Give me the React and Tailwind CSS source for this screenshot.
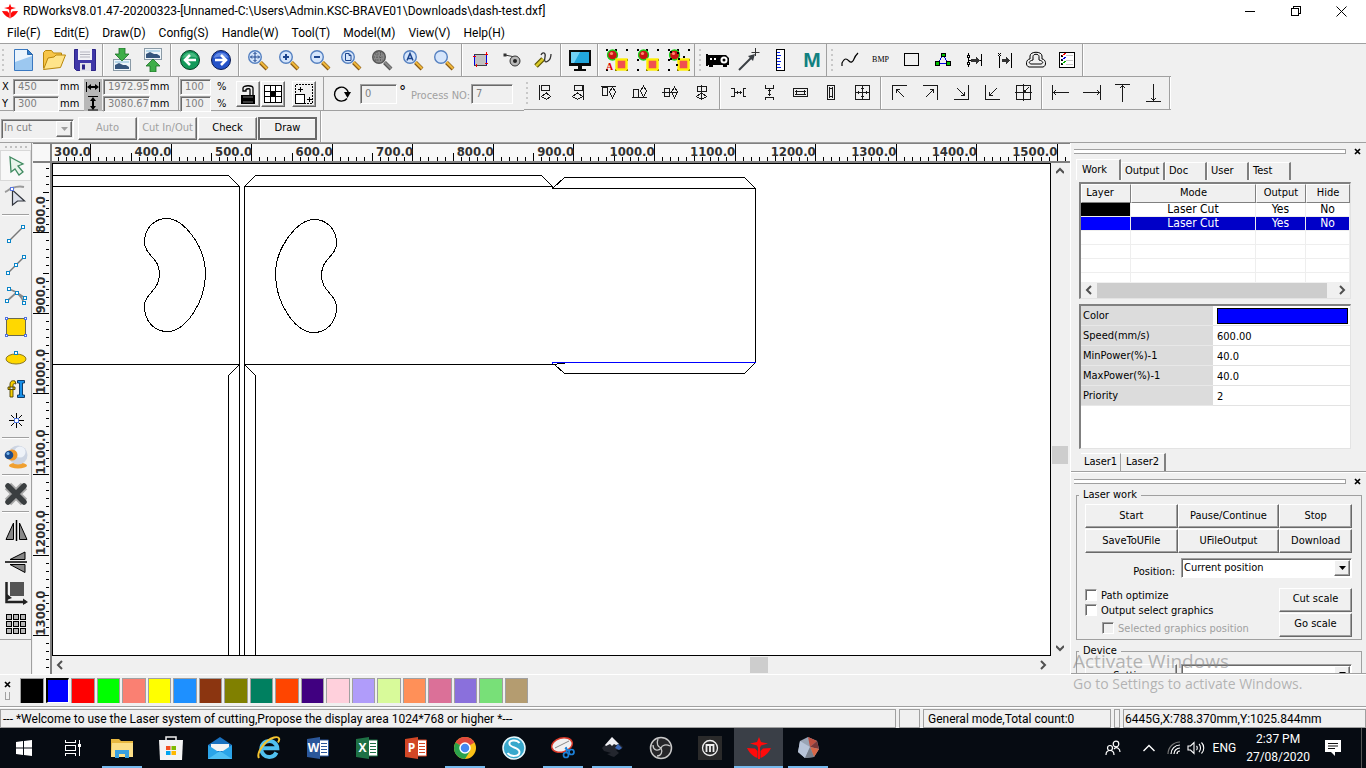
import React from "react";

const raised =
  "border border-t-white border-l-white border-r-[#696969] border-b-[#696969] shadow-[inset_-1px_-1px_#a0a0a0]";
const sunken =
  "border border-t-[#a0a0a0] border-l-[#a0a0a0] border-r-white border-b-white shadow-[inset_1px_1px_#696969]";

function Svg({ w = 24, h = 24, crisp, children }) {
  return (
    <svg
      width={w}
      height={h}
      viewBox={`0 0 ${w} ${h}`}
      fill="none"
      shapeRendering={crisp ? "crispEdges" : "auto"}
      className="block shrink-0"
      aria-hidden="true"
    >
      {children}
    </svg>
  );
}

function Tool({ label, children }) {
  return (
    <button type="button" aria-label={label} className="flex h-full w-[31px] shrink-0 items-center justify-center">
      {children}
    </button>
  );
}

function Sep() {
  return (
    <div className="flex w-1.5 shrink-0 justify-center self-stretch">
      <div className="w-0.5 border-l border-r border-l-[#a0a0a0] border-r-white" />
    </div>
  );
}

function Grip({ edge }) {
  return (
    <div className={`flex shrink-0 items-center gap-[3px] self-stretch ${edge ? "w-2 border-l border-[#a0a0a0] pl-1" : "w-[7px] pl-0.5"}`}>
      <div className="h-[22px] w-0.5 bg-[repeating-linear-gradient(to_bottom,#c8c8c8_0_2px,transparent_2px_5px)]" />
    </div>
  );
}

/* ---------- main toolbar icons ---------- */

function Magnifier({ gray, children }) {
  return (
    <Svg w={22} h={22}>
      <path d="M13.5 13.5L20 20" stroke={gray ? "#555" : "#8a5a14"} strokeWidth="4" />
      <path d="M13.5 13L20 19.5" stroke={gray ? "#888" : "#f0b83c"} strokeWidth="2.2" />
      <circle cx="8" cy="8" r="6.3" fill={gray ? "#8a8a8a" : "#d5e5fb"} stroke={gray ? "#555" : "#5580c0"} strokeWidth="1.4" />
      {children}
    </Svg>
  );
}

function Picture({ y }) {
  return (
    <g>
      <rect x="3.5" y={y + 0.5} width="17" height="11" fill="#eef5fa" stroke="#8a9aa6" />
      <path d={`M5 ${y + 10}V${y + 6}l4-2 4 2 3 0 3 2v2z`} fill="#35557d" />
      <path d={`M5 ${y + 2}h14v2H5z`} fill="#b8d8ea" />
    </g>
  );
}

function Ball({ variant }) {
  return (
    <Svg w={24} h={24}>
      <g fill="#000">
        {[0, 9, 20].map((x) => (
          <React.Fragment key={x}>
            <rect x={x + 1} y="1" width="2" height="2" />
            <rect x={x + 1} y="21" width="2" height="2" />
          </React.Fragment>
        ))}
        <rect x="21" y="11" width="2" height="2" />
        {variant !== "a" && <rect x="1" y="11" width="2" height="2" />}
      </g>
      <circle cx="7.5" cy="7" r="5" fill="#c81414" stroke="#18d018" strokeWidth="1.3" />
      <circle cx="6.5" cy="5.5" r="1.6" fill="#ff8a70" />
      <rect x="11.5" y="11.5" width="10" height="10" fill="#f05050" stroke="#ffee00" strokeWidth="2.4" />
      {variant === "a" && (
        <text x="1" y="22" fontSize="10" fontFamily="Liberation Serif, serif" fontWeight="700" fill="#e00000">
          A
        </text>
      )}
      {variant === "c" && (
        <g fill="#000">
          <rect x="3" y="3" width="2" height="2" />
          <rect x="10" y="4" width="2" height="2" />
          <rect x="3" y="10" width="2" height="2" />
          <rect x="11" y="10" width="2" height="2" />
          <rect x="16" y="8" width="2" height="2" />
          <rect x="9" y="16" width="2" height="2" />
        </g>
      )}
    </Svg>
  );
}

function MainToolbar() {
  return (
    <div className="flex h-8 items-stretch">
      <Grip />
      <Tool label="New">
        <Svg>
          <path d="M3.5 1.5h13l5 5v16h-18z" fill="#eaf4fd" stroke="#3a78c0" />
          <path d="M4 14l17-6v14H4z" fill="#9cc8f0" />
          <path d="M16.5 1.5v5h5z" fill="#2f7fd0" stroke="#2a66a8" />
        </Svg>
      </Tool>
      <Tool label="Open">
        <Svg>
          <path d="M1.5 20V4.5l2-2h6l2 2.5h8v4" fill="#f7c548" stroke="#b8860b" />
          <path d="M1.5 21.5L6 10l6-1 2-2h9.5l-5 12.5z" fill="#ffe48a" stroke="#b8860b" />
        </Svg>
      </Tool>
      <Tool label="Save">
        <Svg>
          <path d="M1.5 1.5h21v21h-19l-2-2z" fill="#4038a8" stroke="#2c2488" />
          <path d="M5 1h14v11H5z" fill="#f2f2f6" />
          <path d="M7 4h10M7 6.5h10M7 9h10" stroke="#b4b4be" />
          <path d="M7 15h11v8H7z" fill="#e4e4ea" />
          <path d="M9 16.5h3v5H9z" fill="#2c2488" />
        </Svg>
      </Tool>
      <Sep />
      <Tool label="Import">
        <Svg>
          <Picture y={11} />
          <path d="M9 0h6v6h4l-7 7-7-7h4z" fill="#3fae49" stroke="#1d6e26" strokeWidth=".8" />
        </Svg>
      </Tool>
      <Tool label="Export">
        <Svg>
          <Picture y={0} />
          <path d="M9 24h6v-6h4l-7-7-7 7h4z" fill="#3fae49" stroke="#1d6e26" strokeWidth=".8" />
        </Svg>
      </Tool>
      <Sep />
      <Tool label="Undo">
        <Svg w={22} h={22}>
          <circle cx="11" cy="11" r="9.5" fill="#14995a" stroke="#063c24" />
          <path d="M3.5 9a8 8 0 0 1 15 0c-5-2-10-2-15 0z" fill="#5cc890" opacity=".7" />
          <path d="M17 11H6.5M11 6l-5 5 5 5" stroke="#fff" strokeWidth="2.6" />
        </Svg>
      </Tool>
      <Tool label="Redo">
        <Svg w={22} h={22}>
          <circle cx="11" cy="11" r="9.5" fill="#2452c8" stroke="#0a1a50" />
          <path d="M3.5 9a8 8 0 0 1 15 0c-5-2-10-2-15 0z" fill="#7ca0f0" opacity=".7" />
          <path d="M5 11h10.5M11 6l5 5-5 5" stroke="#fff" strokeWidth="2.6" />
        </Svg>
      </Tool>
      <Sep />
      <Tool label="Pan">
        <Magnifier>
          <path d="M8 3.5v9M3.5 8h9M6.5 5L8 3.5 9.5 5M6.5 11L8 12.5 9.5 11M5 6.5L3.5 8 5 9.5M11 6.5L12.5 8 11 9.5" stroke="#1c458e" />
        </Magnifier>
      </Tool>
      <Tool label="Zoom in">
        <Magnifier>
          <path d="M8 5v6M5 8h6" stroke="#1c458e" strokeWidth="2" />
        </Magnifier>
      </Tool>
      <Tool label="Zoom out">
        <Magnifier>
          <path d="M5 8h6" stroke="#1c458e" strokeWidth="2" />
        </Magnifier>
      </Tool>
      <Tool label="Zoom to page">
        <Magnifier>
          <path d="M5.5 4.5h3.5l2 2v5H5.5zM9 4.5v2h2" stroke="#1c458e" />
        </Magnifier>
      </Tool>
      <Tool label="Zoom to data">
        <Magnifier gray>
          <path d="M4 5h8M3 8h10M4 11h8M6 3v10M9.5 3v10" stroke="#555" strokeDasharray="1 1.5" />
        </Magnifier>
      </Tool>
      <Tool label="Zoom to selection">
        <Magnifier>
          <path d="M5 11.5L8 4.5l3 7M6 9.5h4" stroke="#1c458e" strokeWidth="1.5" />
        </Magnifier>
      </Tool>
      <Tool label="Zoom window">
        <Magnifier />
      </Tool>
      <Sep />
      <Tool label="Show path">
        <Svg w={18} h={18} crisp>
          <rect x="2" y="3" width="13" height="11" fill="#c0c0c0" />
          <path d="M2.5 3v12M14.5 2v12" stroke="#0000e0" />
          <path d="M2 3.5h13M2 14.5h13" stroke="#404040" />
          <path d="M1 5.5h3M13 3.5h3M13 12.5h3M4.5 13v3M14.5 1v3" stroke="#f00000" />
        </Svg>
      </Tool>
      <Tool label="Track">
        <Svg w={18} h={18}>
          <path d="M2 4l10 2" stroke="#333" />
          <rect x=".5" y="2.5" width="3" height="3" fill="#333" />
          <circle cx="12" cy="10" r="5" fill="#b8b8b8" stroke="#333" />
          <circle cx="12" cy="10" r="2" fill="#222" />
        </Svg>
      </Tool>
      <Tool label="Cut settings">
        <Svg w={20} h={18}>
          <path d="M3 15l7-7" stroke="#5c5400" strokeWidth="5" />
          <path d="M3 15l7-7" stroke="#d8c828" strokeWidth="2.5" />
          <path d="M8 4c2-4 5-2 4 2s0 6 3 4 3-4 3-7" stroke="#333" strokeWidth="1.3" />
        </Svg>
      </Tool>
      <Sep />
      <Tool label="Preview">
        <Svg>
          <path d="M1 2h22v16H1z" fill="#0a0a0a" />
          <path d="M3 4h18v11H3z" fill="#22a6dc" />
          <path d="M3 4h9l-6 11H3z" fill="#70d0f4" />
          <path d="M10 18h4v3h4v2H6v-2h4z" fill="#0a0a0a" />
        </Svg>
      </Tool>
      <Sep />
      <Tool label="Select by layer"><Ball variant="a" /></Tool>
      <Tool label="Select by color"><Ball variant="b" /></Tool>
      <Tool label="Select by shape"><Ball variant="c" /></Tool>
      <Grip edge />
      <Tool label="Laser position">
        <Svg>
          <path d="M0 6h2v1h18l3 3v7H2v1H0z" fill="#000" />
          <path d="M3 17h4v2H3zM17 17h4v2h-4z" fill="#000" />
          <circle cx="18" cy="12" r="3.5" fill="#fff" />
          <circle cx="18" cy="12" r="1.5" fill="#000" />
          <path d="M4 10h2v2H4zM8 10h2v2H8z" fill="#fff" />
        </Svg>
      </Tool>
      <Tool label="Magic wand">
        <Svg>
          <path d="M2 22L15 9" stroke="#3a3f44" strokeWidth="2" />
          <path d="M11 8l7-2-2 7z" fill="#3a3f44" />
          <path d="M18.5 0v8M14.5 4.5h8" stroke="#333" />
        </Svg>
      </Tool>
      <Tool label="Ruler">
        <Svg w={24} h={24} crisp>
          <rect x="8.5" y="1.5" width="8" height="21" fill="#fff" stroke="#000" />
          <path d="M9 4.5h3M9 7.5h4M9 10.5h3M9 13.5h4M9 16.5h3M9 19.5h4" stroke="#0020f0" />
        </Svg>
      </Tool>
      <Tool label="Material library">
        <span className="pl-[3px] font-['Liberation_Sans',sans-serif] text-[21px] font-bold leading-6 text-[#128080]">M</span>
      </Tool>
      <Grip edge />
      <Tool label="Smooth curve">
        <Svg w={18} h={16}>
          <path d="M1 14v-3c3-6 5-4 7-2s4 1 5-2 2-4 4-6" stroke="#000" strokeWidth="1.2" />
        </Svg>
      </Tool>
      <Tool label="Bitmap">
        <span className="font-['Liberation_Serif',serif] text-[8px] leading-3">BMP</span>
      </Tool>
      <Tool label="Rectangle">
        <Svg w={16} h={16} crisp>
          <rect x=".5" y="1.5" width="14" height="12" stroke="#000" />
        </Svg>
      </Tool>
      <Tool label="Edit nodes">
        <Svg w={16} h={16} crisp>
          <path d="M8 3L3 11h10z" stroke="#0000e0" />
          <path d="M6.5 1.5h4v3h-4zM.5 9.5h4v4h-4zM11.5 9.5h4v4h-4z" fill="#00c000" stroke="#000" />
        </Svg>
      </Tool>
      <Tool label="Offset">
        <Svg w={16} h={16} crisp>
          <path d="M2.5 1v14M15.5 2v12M3 8.5h3M11 8.5h4" stroke="#000" />
          <path d="M1.5 3.5h2v2h-2zM1.5 10.5h2v2h-2z" fill="#fff" stroke="#000" />
          <path d="M5 7h5V5l4 3.5-4 3.5v-2H5z" fill="#333" />
        </Svg>
      </Tool>
      <Tool label="Align nodes">
        <Svg w={16} h={16} crisp>
          <path d="M2.5 4v12M14.5 1v15" stroke="#000" />
          <path d="M1 1l3 3M4 1L1 4" stroke="#000" />
          <path d="M5 7h4V5l4 3.5-4 3.5v-2H5z" fill="#333" />
        </Svg>
      </Tool>
      <Tool label="Outline">
        <Svg w={22} h={18}>
          <path d="M5 5c0-5 12-5 12 0v3c4 0 5 7 1 8H4c-4-1-3-8 1-8z" stroke="#000" />
          <path d="M8 5.5c0-3 6-3 6 0V9c4 1 5 3 2 4H6c-3-1-2-3 2-4z" stroke="#000" />
        </Svg>
      </Tool>
      <Tool label="Check list">
        <Svg w={18} h={18} crisp>
          <rect x="1.5" y="1.5" width="15" height="15" fill="#fff" stroke="#000" />
          <path d="M8 4.5h7M8 9h7M8 13.5h7" stroke="#c8c8c8" />
          <path d="M3 4h2v2H3zM3 8h2v2H3zM3 12h2v2H3z" fill="#000" />
          <path d="M4 5l4-3" stroke="#f00000" />
          <path d="M4 9l4-3" stroke="#0000e0" />
          <path d="M4 13l4-3" stroke="#00b000" />
        </Svg>
      </Tool>
      <div className="w-0.5 border-l border-r border-l-[#a0a0a0] border-r-white" />
    </div>
  );
}

/* ---------- position and alignment bar ---------- */

function Field({ label, value, className = "" }) {
  return (
    <input
      aria-label={label}
      defaultValue={value}
      disabled
      className={`${sunken} bg-[#f0f0f0] pl-1 text-[11px] text-[#808080] outline-none ${className}`}
    />
  );
}

const alignIcons = [
  [
    ["Align left", "M1.5 1v15M3 1.5h8v5H3zM8.5 9l-5 3.5 5 3 4-3z"],
    ["Align right", "M14.5 1v15M5 1.5h8v5H5zM8.5 9l-5 3.5 5 3 5-3z"],
    ["Align top", "M1 2.5h15M2.5 3v8h5V3zM12.5 3l-3 5 3 6 3-6z"],
    ["Align bottom", "M1 13.5h15M2.5 5v8h5V5zM12.5 2l-3 5 3 6 3-6z"],
    ["Align middle", "M0 8.5h16M2.5 4v8h5V4zM12.5 3l-3 5 3 6 3-6z"],
    ["Align center", "M8.5 1v15M4 2.5h9v5H4zM8.5 9l-5 3.5 5 3 5-3z"],
  ],
  [
    ["Equal horizontal", "M1 4.5h3v8H1M16 4.5h-3v8h3M5 8.5h7M7 7v3M10 7v3"],
    ["Equal vertical", "M4.5 1v3h8V1M4.5 16v-3h8v3M8.5 5v7M7 6.5h3M7 10.5h3"],
    ["Same width", "M1.5 4.5h14v8h-14zM3 7.5h11M3 10.5h11M4.5 6v5M12.5 6v5"],
    ["Same height", "M4.5 1.5h7v14h-7zM6.5 3v11M9.5 3v11M6 4.5h4M6 12.5h4"],
    ["Same size", "M1.5 1.5h14v14h-14zM8.5 2v13M2 8.5h13M4.5 7v3M12.5 7v3M7 4.5h3M7 12.5h3"],
  ],
  [
    ["To top left", "M1.5 16V1.5H16M5 5l8 8M5 5.5h4M5.5 5v4"],
    ["To top right", "M1 1.5h14.5V16M12 5l-8 8M12 5.5H8M11.5 5v4"],
    ["To bottom right", "M15.5 1v14.5H1M12 12L4 4M12 11.5H8M11.5 12V8"],
    ["To bottom left", "M1.5 1v14.5H16M5 12l8-8M5 11.5h4M5.5 12V8"],
    ["To center", "M1.5 1.5h14v14h-14zM8.5 0v17M0 8.5h17M8 9l6-6M8 7.5h3M9.5 9V6"],
  ],
  [
    ["To left edge", "M.5 1v15M1 8.5h16M4 6L2 8.5 4 11"],
    ["To right edge", "M17.5 1v15M0 8.5h17M14 6l2 2.5-2 2.5"],
    ["To top edge", "M1 .5h15M8.5 1v17M6 4l2.5-2L11 4"],
    ["To bottom edge", "M1 17.5h15M8.5 0v17M6 14l2.5 2 2.5-2"],
  ],
];

function PositionBar() {
  return (
    <div className="flex items-start">
      <div className="flex h-[35px] w-[524px] shrink-0 items-stretch border-y border-t-[#a0a0a0] border-b-[#a0a0a0] text-[11px]">
        <div className="flex w-[178px] items-center pl-0.5 pt-[3px]">
          <div className="grid grid-cols-[11px_46px_25px] items-center gap-y-px leading-4">
            <label>X</label>
            <Field label="X" value="450" className="h-4 w-[46px]" />
            <span className="pl-px">mm</span>
            <label>Y</label>
            <Field label="Y" value="300" className="h-4 w-[46px]" />
            <span className="pl-px">mm</span>
          </div>
          <div className="flex flex-col bg-[#b8b8b8]">
            <Svg w={18} h={16}>
              <path d="M2.5 3v10M15.5 3v10" stroke="#000" />
              <path d="M3 8l4-3v2h4V5l4 3-4 3V9H7v2z" fill="#000" />
            </Svg>
            <Svg w={18} h={16}>
              <path d="M4 1.5h10M4 15h10" stroke="#000" />
              <path d="M9 2L6 6h2v5H6l3 4 3-4h-2V6h2z" fill="#000" />
            </Svg>
          </div>
          <div className="grid grid-cols-[47px_25px] items-center gap-y-px pl-px leading-4">
            <Field label="Width" value="1972.95" className="h-4 w-[47px]" />
            <span>mm</span>
            <Field label="Height" value="3080.67" className="h-4 w-[47px]" />
            <span>mm</span>
          </div>
        </div>
        <div className="flex w-[146px] items-center gap-[3px] border-x border-x-[#a0a0a0] pl-px">
          <div className="grid grid-cols-[31px_22px] items-center gap-y-px pt-[3px] leading-4">
            <Field label="Width percent" value="100" className="h-4 w-[31px]" />
            <span className="pl-1.5">%</span>
            <Field label="Height percent" value="100" className="h-4 w-[31px]" />
            <span className="pl-1.5">%</span>
          </div>
          <button type="button" aria-label="Lock ratio" className={`flex h-[26px] w-6 items-center justify-center ${raised}`}>
            <Svg w={18} h={20}>
              <path d="M4 4c0-3 10-3 10 0v7M4 4v3h3V5.5c1-1 4-1 4 0V11" stroke="#000" strokeWidth="1.3" />
              <path d="M2 11h14v9H2z" fill="#000" />
              <path d="M4 13h10M4 18h10" stroke="#aaa" strokeWidth=".7" />
            </Svg>
          </button>
          <button type="button" aria-label="Anchor" className={`-ml-0.5 flex h-[26px] w-6 items-center justify-center ${raised}`}>
            <Svg w={18} h={18} crisp>
              <rect x=".5" y=".5" width="17" height="17" fill="#fff" stroke="#000" />
              <path d="M1 6.5h16M1 11.5h16M6.5 1v16M11.5 1v16" stroke="#000" />
              <path d="M6 6h6v6H6z" fill="#000" />
            </Svg>
          </button>
          <button type="button" aria-label="Array copy" className={`ml-1 flex h-[26px] w-6 items-center justify-center ${raised}`}>
            <Svg w={22} h={22} crisp>
              <path d="M2.5 10V1.5h17v19H12" stroke="#000" strokeDasharray="2 1" />
              <rect x="2.5" y="11.5" width="9" height="9" fill="#fff" stroke="#000" />
              <path d="M7.5 4v5M5 6.5h5M16.5 14v5M14 16.5h5" stroke="#000" />
            </Svg>
          </button>
        </div>
        <div className="flex items-center">
          <div className="flex w-9 justify-center">
            <Svg w={20} h={20}>
              <path d="M15 14.5A7 7 0 1 1 16.5 10" stroke="#000" strokeWidth="1.4" />
              <path d="M12 8h7l-3.5 6z" fill="#000" />
            </Svg>
          </div>
          <Field label="Angle" value="0" className="h-5 w-[37px]" />
          <span className="w-3.5 self-start pl-0.5 text-[16px] leading-[30px]">°</span>
          <label className="mt-1.5 w-[60px] text-[#a0a0a0]">Process NO:</label>
          <Field label="Process number" value="7" className="h-5 w-[42px]" />
        </div>
      </div>
      <div className="flex h-[34px] items-stretch border-y border-[#a0a0a0]">
        <Grip />
        {alignIcons.map((group, i) => (
          <React.Fragment key={i}>
            {i > 0 && <Sep />}
            {group.map(([label, d]) => (
              <Tool key={label} label={label}>
                <Svg w={18} h={18} crisp>
                  <path d={d} stroke="#1a1a1a" />
                </Svg>
              </Tool>
            ))}
          </React.Fragment>
        ))}
        <div className="w-0.5 border-l border-r border-l-[#a0a0a0] border-r-white" />
      </div>
    </div>
  );
}

function CutBar() {
  const btn = "flex h-[23px] w-[59px] items-center justify-center";
  return (
    <div className="flex h-[31px] items-stretch">
      <div className="flex items-center gap-px pl-px pt-1">
        <div className="relative mr-[3px]">
          <select aria-label="Cut mode" disabled className={`block h-5 w-[73px] appearance-none bg-[#f0f0f0] px-0.5 text-[11px] text-[#808080] opacity-100 ${sunken}`}>
            <option>In cut</option>
          </select>
          <span className={`pointer-events-none absolute right-0.5 top-0.5 flex h-4 w-4 items-center justify-center bg-[#f0f0f0] ${raised}`}>
            <Svg w={7} h={4}><path d="M0 0h7L3.5 4z" fill="#a0a0a0" /></Svg>
          </span>
        </div>
        <button type="button" disabled className={`${btn} ${raised} text-[#a0a0a0]`}>Auto</button>
        <button type="button" disabled className={`${btn} ${raised} whitespace-nowrap text-[#a0a0a0]`}>Cut In/Out</button>
        <button type="button" className={`${btn} ${raised}`}>Check</button>
        <button type="button" className={`${btn} border-2 border-[#696969] shadow-[inset_1px_1px_#fff]`}>Draw</button>
      </div>
      <div className="ml-[3px] border-l border-r border-l-[#a0a0a0] border-r-white" />
    </div>
  );
}

/* ---------- left drawing tools ---------- */

function SideTool({ label, active, children }) {
  return (
    <button
      type="button"
      aria-label={label}
      className={`flex h-[31px] w-full shrink-0 items-center justify-center ${active ? "border border-[#d8d8d8] bg-[#f8f8f8]" : ""}`}
    >
      {children}
    </button>
  );
}

function SideSep() {
  return (
    <div className="flex h-1.5 shrink-0 items-center px-0.5">
      <div className="h-0.5 w-full border-t border-b border-t-[#a0a0a0] border-b-white" />
    </div>
  );
}

const node = (x, y) => <rect key={`${x}-${y}`} x={x - 1.5} y={y - 1.5} width="3" height="3" fill="#fff" stroke="#0a84c8" />;

function SideBar() {
  return (
    <nav aria-label="Drawing tools" className="flex w-8 shrink-0 flex-col border-r border-[#a0a0a0]">
      <div className="flex h-[7px] shrink-0 items-center justify-center">
        <div className="h-0.5 w-[22px] bg-[repeating-linear-gradient(to_right,#c0c0c0_0_2px,transparent_2px_5px)]" />
      </div>
      <SideTool label="Select" active>
        <Svg w={18} h={22}>
          <path d="M3 2l13 7-5 2 5 6-4 3-4-6-4 3z" fill="#e8f4ea" stroke="#3f8a60" strokeWidth="1.3" />
        </Svg>
      </SideTool>
      <SideTool label="Node edit">
        <Svg>
          <path d="M1 7c3-1 4-3 7-4s8-2 12-1" stroke="#999" strokeWidth="2" />
          <path d="M8.5 5v15l5-4h7z" fill="#dce0ec" stroke="#30343c" strokeWidth="1.2" />
          <rect x="6.5" y="2.5" width="3" height="3" fill="#fff" stroke="#5a78e0" />
        </Svg>
      </SideTool>
      <SideSep />
      <SideTool label="Line">
        <Svg w={20} h={20}><path d="M3 17L17 3" stroke="#777" strokeWidth="1.5" />{node(3, 17)}{node(17, 3)}</Svg>
      </SideTool>
      <SideTool label="Polyline">
        <Svg w={20} h={20}><path d="M2 18L18 2" stroke="#777" strokeWidth="1.5" />{node(2, 18)}{node(10, 10)}{node(18, 2)}</Svg>
      </SideTool>
      <SideTool label="Bezier">
        <Svg w={22} h={20}>
          <path d="M2 15L11 7M4 3l7 3 9 6M11 7c5 2 6 6 8 10" stroke="#888" strokeWidth="1.7" />
          {node(2, 15)}{node(4, 3)}{node(12, 7)}{node(20, 12)}{node(19, 17)}
        </Svg>
      </SideTool>
      <SideTool label="Rectangle">
        <Svg w={22} h={22}>
          <rect x="1.5" y="2.5" width="19" height="17" fill="#ffd800" stroke="#6a6a50" />
          {[[1.5, 2.5], [20.5, 2.5], [1.5, 19.5], [20.5, 19.5]].map(([x, y]) => (
            <rect key={`${x}${y}`} x={x - 1} y={y - 1} width="2" height="2" fill="#fff" stroke="#5070e0" />
          ))}
        </Svg>
      </SideTool>
      <SideTool label="Ellipse">
        <Svg w={22} h={14}>
          <ellipse cx="11" cy="8" rx="10" ry="5" fill="#ffd800" stroke="#8a7820" />
          {node(11, 2)}
        </Svg>
      </SideTool>
      <SideTool label="Text">
        <Svg w={20} h={22}>
          <path d="M9 3c-4-1-5 1-5 4v12h3V7c0-1 1-2 3-1zM2 9h7v2.5H2z" fill="#f8d000" stroke="#4a4000" strokeWidth=".9" />
          <path d="M11.5 2.5h7v2.5h-2v12h2v2.5h-7V17h2V5h-2z" fill="#1890e8" stroke="#123c68" />
        </Svg>
      </SideTool>
      <SideTool label="Point">
        <Svg w={16} h={16} crisp>
          <path d="M8.5 1v15M1 8.5h15M3 3l11 11M14 3L3 14" stroke="#000" />
          <rect x="6.5" y="6.5" width="4" height="4" fill="#fff" stroke="#5078e0" />
        </Svg>
      </SideTool>
      <SideSep />
      <SideTool label="Camera">
        <Svg>
          <ellipse cx="14" cy="20.5" rx="9" ry="3" fill="#f0a030" />
          <circle cx="14" cy="10" r="9.5" fill="#ccd4e2" />
          <circle cx="16" cy="7" r="5.5" fill="#eef2f8" />
          <circle cx="8" cy="10" r="5.5" fill="#f09828" />
          <circle cx="5" cy="10" r="4.3" fill="#1c4c8c" />
          <circle cx="4" cy="8.5" r="1.5" fill="#78b8f0" />
        </Svg>
      </SideTool>
      <SideSep />
      <SideTool label="Delete">
        <Svg>
          <path d="M4 4l16 16M20 4L4 20" stroke="#a8a8a8" strokeWidth="9" />
          <path d="M4 4l16 16M20 4L4 20" stroke="#3a3e40" strokeWidth="5.5" strokeLinecap="round" />
        </Svg>
      </SideTool>
      <SideSep />
      <SideTool label="Mirror horizontally">
        <Svg>
          <path d="M12.5 1v21" stroke="#000" strokeWidth="1.5" />
          <path d="M9.5 4v16.5H2zM15.5 4v16.5H23z" fill="#888" stroke="#000" />
        </Svg>
      </SideTool>
      <SideTool label="Mirror vertically">
        <Svg>
          <path d="M1 12h22" stroke="#000" strokeWidth="1.5" />
          <path d="M21 9.5H6L21 2zM21 14.5H6l15 8z" fill="#888" stroke="#000" />
        </Svg>
      </SideTool>
      <SideTool label="Dock">
        <Svg>
          <path d="M6 1h14v14H6z" fill="#555" />
          <path d="M2.5 1v20H22" stroke="#222" strokeWidth="2.5" />
          <path d="M19 17.5l5 3.5-5 3zM3 13l5 4-5 2z" fill="#222" />
        </Svg>
      </SideTool>
      <SideTool label="Array">
        <Svg w={22} h={22} crisp>
          {[1.5, 8.5, 15.5].flatMap((x) =>
            [1.5, 8.5, 15.5].map((y) => <rect key={`${x}-${y}`} x={x} y={y} width="5" height="5" fill="#b8b8b8" stroke="#000" />)
          )}
        </Svg>
      </SideTool>
      <div className="border-t border-[#a0a0a0]" />
    </nav>
  );
}

/* ---------- rulers and drawing area ---------- */

const ticks = (first, count) => Array.from({ length: count }, (_, i) => [Math.round(first + i * 8.053) + 0.5, i]);
const rulerText = "fill-[#333] text-[13px] font-bold";

function TopRuler() {
  return (
    <svg className="h-full w-full" aria-label="Horizontal ruler">
      {ticks(-2, 128).map(([x, i]) => {
        const k = (i + 5) % 10;
        return <path key={i} d={`M${x} ${k === 0 ? 0 : k === 5 ? 9 : 13}V17`} stroke="#000" shapeRendering="crispEdges" />;
      })}
      {Array.from({ length: 13 }, (_, i) => (
        <text key={i} x={39 + i * 80.53} y="12" textAnchor="end" className={rulerText}>
          {`${300 + i * 100}.0`}
        </text>
      ))}
    </svg>
  );
}

function SideRuler() {
  return (
    <svg className="h-full w-full" aria-label="Vertical ruler">
      {ticks(5, 64).map(([y, i]) => {
        const k = (i + 2) % 10;
        return <path key={i} d={`M${k === 0 ? 0 : k === 5 ? 10 : 13} ${y}H16`} stroke="#000" shapeRendering="crispEdges" />;
      })}
      {Array.from({ length: 6 }, (_, i) => (
        <text key={i} transform={`translate(12 ${70 + i * 80.53}) rotate(-90)`} className={rulerText}>
          {`${800 + i * 100}.0`}
        </text>
      ))}
    </svg>
  );
}

const BEAN =
  "M166.5 218.5C153 218.5 144.5 230 144.5 241.5C144.5 256 159.5 257 159.5 274C159.5 291 144.5 293 144.5 306.5C144.5 321 154 331.5 167.5 331.5C185 331.5 205.5 303 205.5 273C205.5 247 184 218.5 166.5 218.5Z";

function Drawing() {
  return (
    <svg className="h-full w-full" aria-label="Drawing" fill="none" stroke="#000" shapeRendering="crispEdges">
      <g transform="translate(-53 -164)">
        <path d="M50 175.5H228.5L239.5 186.5M50 186.5H239.5M244.5 186.5L255.5 175.5H541.5L553.5 187.5M244.5 186.5H552.5V188.5H755.5V362.5" />
        <path d="M553.5 187.5L564.5 177.5H744.5L755.5 188.5M239.5 186V900M244.5 186V900M50 364.5H239.5M244.5 364.5H557" />
        <path d="M239.5 364.5L228.5 375.5V900M244.5 364.5L255.5 375.5V900" />
        <path d="M554.5 364.5L564.5 373.5H744.5L755.5 362.5" />
        <path d="M557 363.5H565" />
        <path d="M552.5 364V362.5H755.5" stroke="#0000ff" />
        <path d={BEAN} />
        <path d={BEAN} transform="translate(481 1) scale(-1 1)" />
      </g>
    </svg>
  );
}

function Chevron({ dir, label }) {
  const d = { left: "M6 1L2 5l4 4", right: "M2 1l4 4-4 4", up: "M0 7l4-4 4 4", down: "M0 3l4 4 4-4" }[dir];
  return (
    <button type="button" aria-label={label} className="flex h-4 w-4 shrink-0 items-center justify-center">
      <Svg w={8} h={10}><path d={d} stroke="#505050" strokeWidth="2" /></Svg>
    </button>
  );
}

function Workspace() {
  return (
    <main className="grid min-w-0 flex-1 grid-cols-[19px_minmax(0,1fr)] grid-rows-[20px_minmax(0,1fr)] pl-px">
      <div className="border-b-2 border-r-2 border-t border-[#808080] bg-[#f8f8f8]" />
      <div className="border-b-2 border-t border-[#808080] bg-[#f8f8f8]"><TopRuler /></div>
      <div className="border-r-2 border-[#808080] bg-[#f8f8f8]"><SideRuler /></div>
      <div className="grid min-h-0 grid-cols-[minmax(0,1fr)_19px] grid-rows-[minmax(0,1fr)_18px]">
        <div className="min-h-0 overflow-hidden border border-black bg-white"><Drawing /></div>
        <div className="flex flex-col items-center pr-0.5">
          <Chevron dir="up" label="Scroll up" />
          <div className="flex w-4 flex-1 flex-col">
            <div className="grow-[267]" />
            <div className="h-[18px] bg-[#cdcdcd]" />
            <div className="grow-[176]" />
          </div>
          <Chevron dir="down" label="Scroll down" />
        </div>
        <div className="flex items-center">
          <Chevron dir="left" label="Scroll left" />
          <div className="flex h-4 flex-1">
            <div className="grow-[682]" />
            <div className="w-[18px] bg-[#cdcdcd]" />
            <div className="grow-[267]" />
          </div>
          <Chevron dir="right" label="Scroll right" />
        </div>
        <div />
      </div>
    </main>
  );
}

/* ---------- right panels ---------- */

function PanelHead() {
  return (
    <div className="flex h-3 items-center gap-1.5 pr-1">
      <div className="h-[5px] flex-1 border-y border-r border-[#a0a0a0] bg-white" />
      <button type="button" aria-label="Close panel" className="flex h-2.5 w-2.5 items-center justify-center">
        <Svg w={7} h={7}><path d="M1 1l5 5M6 1L1 6" stroke="#000" strokeWidth="1.7" /></Svg>
      </button>
    </div>
  );
}

const tabs = [["Output", "w-[44px]"], ["Doc", "w-[42px]"], ["User", "w-[42px]"], ["Test", "w-[42px]"]];
const layers = [["#000000", false], ["#0000ff", true]];
const props = [["Speed(mm/s)", "600.00"], ["MinPower(%)-1", "40.0"], ["MaxPower(%)-1", "40.0"], ["Priority", "2"]];
const th = "border border-t-white border-l-white border-r-[#808080] border-b-[#808080] bg-[#f0f0f0] p-0 font-normal";

function LayerPanel() {
  return (
    <section className="h-[329px] shrink-0 border-b border-[#a0a0a0] pl-[3px] pt-0.5">
      <PanelHead />
      <div role="tablist" className="mt-px flex h-[22px] items-end pl-0.5">
        <button type="button" role="tab" className="flex h-[21px] w-[45px] items-center justify-start border-l border-r-2 border-t border-l-white border-r-[#808080] border-t-white pl-[5px]">Work</button>
        {tabs.map(([name, w]) => (
          <button key={name} type="button" role="tab" className={`flex h-[18px] items-center border-l border-r-2 border-t border-l-white border-r-[#808080] border-t-white pl-[3px] ${w}`}>
            {name}
          </button>
        ))}
      </div>
      <div className="ml-[5px] mt-0.5 w-[272px] border-l-2 border-t-2 border-r border-b border-l-[#808080] border-t-[#808080] border-r-[#e3e3e3] border-b-[#e3e3e3] bg-white">
        <div className="h-[98px] overflow-hidden">
          <table className="w-full table-fixed border-separate border-spacing-0 text-center">
            <colgroup>
              <col className="w-[50px]" /><col className="w-[125px]" /><col className="w-[50px]" /><col className="w-[44px]" />
            </colgroup>
            <thead>
              <tr className="h-[18px]">
                <th className={`${th} pr-3`}>Layer</th><th className={th}>Mode</th><th className={th}>Output</th><th className={th}>Hide</th>
              </tr>
            </thead>
            <tbody className="text-[12px] leading-[13px]">
              {layers.map(([color, active]) => {
                const cell = `h-3.5 border-b border-r border-[#eee] p-0 ${active ? "bg-[#0000c8] text-white" : ""}`;
                return (
                  <tr key={color}>
                    <td className="h-3.5 border-b border-r border-[#eee] p-0" style={{ backgroundColor: color }} />
                    <td className={cell}>Laser Cut</td><td className={cell}>Yes</td><td className={cell}>No</td>
                  </tr>
                );
              })}
              {[0, 1, 2, 3].map((r) => (
                <tr key={r}>
                  {[0, 1, 2, 3].map((c) => <td key={c} className="h-3.5 border-b border-r border-[#eee] p-0" />)}
                </tr>
              ))}
            </tbody>
          </table>
        </div>
        <div className="flex h-4 items-center bg-[#f0f0f0]">
          <Chevron dir="left" label="Scroll left" />
          <div className="h-[15px] flex-1 bg-[#cdcdcd]" />
          <div className="w-[7px]" />
          <Chevron dir="right" label="Scroll right" />
        </div>
      </div>
      <div className="ml-[5px] mt-[5px] h-[145px] w-[272px] border-l-2 border-t-2 border-r border-b border-l-[#808080] border-t-[#808080] border-r-[#e3e3e3] border-b-[#e3e3e3] bg-white">
        <dl>
          <div className="flex h-5">
            <dt className="w-[132px] border-b border-[#e8e8e8] bg-[#dcdcdc] pl-0.5 leading-[19px]">Color</dt>
            <dd className="flex-1 border-b border-[#e3e3e3] py-0.5 pl-1 pr-0.5"><div className="h-4 border border-black bg-[#0000ff]" /></dd>
          </div>
          {props.map(([k, v]) => (
            <div key={k} className="flex h-5">
              <dt className="w-[132px] border-b border-[#e8e8e8] bg-[#dcdcdc] pl-0.5 leading-[19px]">{k}</dt>
              <dd className="flex-1 border-b border-[#e3e3e3] pl-1 pt-px leading-5">{v}</dd>
            </div>
          ))}
        </dl>
      </div>
      <div className="ml-[7px] mt-1 flex h-[18px]">
        <button type="button" className="w-10 border-r border-t border-r-[#a0a0a0] border-t-white">Laser1</button>
        <button type="button" className="w-[45px] border-r-2 border-t border-r-[#808080] border-t-white">Laser2</button>
      </div>
    </section>
  );
}

const check = `h-3 w-3 shrink-0 appearance-none bg-white ${sunken}`;

function DropDown({ label, value }) {
  return (
    <div className="relative">
      <select aria-label={label} className={`block h-5 w-[171px] appearance-none bg-white px-0.5 ${sunken}`}>
        <option>{value}</option>
      </select>
      <span className={`pointer-events-none absolute right-0.5 top-0.5 flex h-4 w-4 items-center justify-center bg-[#f0f0f0] ${raised}`}>
        <Svg w={7} h={4}><path d="M0 0h7L3.5 4z" fill="#000" /></Svg>
      </span>
    </div>
  );
}

function WorkPanel() {
  const btn = `flex h-6 items-center justify-center ${raised}`;
  return (
    <section className="relative flex min-h-0 flex-1 flex-col border-t border-b border-t-white border-b-[#a0a0a0] pl-[3px] pt-0.5">
      <PanelHead />
      <div className="min-h-0 flex-1 overflow-hidden pl-0.5 pr-1">
        <fieldset className="mt-px h-[152px] border border-[#a0a0a0] pl-2 pr-[9px]">
          <legend className="-ml-1.5 px-1 leading-[14px]">Laser work</legend>
          <div className="mt-0.5 grid grid-cols-[93fr_102fr_73fr] gap-y-px">
            {["Start", "Pause/Continue", "Stop", "SaveToUFile", "UFileOutput", "Download"].map((t) => (
              <button key={t} type="button" className={btn}>{t}</button>
            ))}
          </div>
          <div className="mt-[3px] flex items-center justify-end gap-1.5">
            <span className="mt-2">Position:</span>
            <DropDown label="Position" value="Current position" />
          </div>
          <div className="mt-[7px] flex justify-between">
            <div className="leading-[15px]">
              <label className="flex items-center gap-1"><input type="checkbox" className={check} />Path optimize</label>
              <label className="flex items-center gap-1"><input type="checkbox" className={check} />Output select graphics</label>
              <label className="ml-[17px] mt-[3px] flex items-center gap-1 text-[#a0a0a0]">
                <input type="checkbox" disabled className={`h-3 w-3 shrink-0 appearance-none bg-[#f0f0f0] ${sunken}`} />Selected graphics position
              </label>
            </div>
            <div className="flex w-[73px] flex-col gap-px">
              <button type="button" className={btn}>Cut scale</button>
              <button type="button" className={btn}>Go scale</button>
            </div>
          </div>
        </fieldset>
        <fieldset className="mt-1 h-[70px] border border-[#a0a0a0] pl-2 pr-[9px]">
          <legend className="-ml-1.5 px-1 leading-[14px]">Device</legend>
          <div className="mt-1.5 flex justify-end gap-1">
            <button type="button" className={`flex h-6 w-[92px] items-center justify-center ${raised}`}>Setting</button>
            <DropDown label="Device" value="" />
          </div>
        </fieldset>
      </div>
      <p className="pointer-events-none absolute left-0.5 top-full -mt-6 whitespace-nowrap font-['Open_Sans',sans-serif] text-[19px] leading-6 text-[#888]/60">
        Activate Windows
        <span className="block text-[14px] leading-[22px]">Go to Settings to activate Windows.</span>
      </p>
    </section>
  );
}

/* ---------- palette, status bar, taskbar ---------- */

const swatches = [
  "#000000", "#0000ff", "#ff0000", "#00ff00", "#fa8072", "#ffff00", "#1e90ff", "#8b3510", "#808000", "#008060",
  "#ff4500", "#400080", "#ffd0dc", "#b09cfa", "#d8fa9a", "#ff9058", "#db7098", "#8a70dc", "#78e078", "#b49c70",
];

function Palette() {
  return (
    <div className="flex h-[32px] items-center border-b border-[#a0a0a0]">
      <div className="flex w-5 shrink-0 flex-col items-center gap-1 pr-[6px]">
        <button type="button" aria-label="Close palette">
          <Svg w={7} h={7}><path d="M1 1l5 5M6 1L1 6" stroke="#000" strokeWidth="1.7" /></Svg>
        </button>
        <div className="h-2 w-[5px] border-x border-b border-[#a0a0a0]" />
      </div>
      <div className="grid w-[510px] grid-cols-[repeat(20,minmax(0,1fr))]">
        {swatches.map((c, i) => (
          <button
            key={c}
            type="button"
            aria-label={`Layer color ${c}`}
            className={`mr-0.5 h-[25px] ${i === 1 ? "border-2 border-b border-r border-t-black border-l-black border-b-white border-r-white" : "border-l border-r border-t border-[#a0a0a0]"}`}
            style={{ backgroundColor: c }}
          />
        ))}
      </div>
    </div>
  );
}

function StatusBar() {
  const cell = "h-[19px] border border-[#a0a0a0] px-0.5 leading-[18px] whitespace-nowrap";
  return (
    <footer className="flex gap-[3px] border-t border-white pt-px font-['Roboto',sans-serif] text-[12px]">
      <div className={`flex-1 ${cell}`}>--- *Welcome to use the Laser system of cutting,Propose the display area 1024*768 or higher *---</div>
      <div className={`w-[21px] ${cell}`} />
      <div className={`w-[188px] ${cell} pl-1`}>General mode,Total count:0</div>
      <div className={`w-1.5 ${cell}`} />
      <div className={`w-[243px] ${cell} pl-px`}>6445G,X:788.370mm,Y:1025.844mm</div>
    </footer>
  );
}

function Office({ color, letter }) {
  return (
    <Svg>
      <path d="M13 4h9.5v16H13z" fill="#fff" stroke={color} />
      <path d="M15 7.5h6M15 10.5h6M15 13.5h6M15 16.5h6" stroke={color} strokeWidth="1.2" />
      <path d="M1 3l13-2v22L1 21z" fill={color} />
      <text x="7.5" y="16" textAnchor="middle" fontSize="12" fontWeight="700" fontFamily="Open Sans, sans-serif" fill="#fff">{letter}</text>
    </Svg>
  );
}

function Logo({ size }) {
  return (
    <svg width={size} height={size} viewBox="0 0 24 24" aria-hidden="true" className="block shrink-0">
      <path d="M12 1l2 5 7 1.5-7 2L12 14l-2-4.5-7-2L10 6z" fill="#ff0a0a" />
      <path d="M0 12l8 .5 2.500 2.500v7C5 20 2 16 0 12zM24 12l-8 .5-2.500 2.500v7C19 20 22 16 24 12z" fill="#ff0a0a" />
      <path d="M11 12h2v11h-2z" fill="#ff0a0a" />
    </svg>
  );
}

const apps = [
  ["Explorer", "bg-[#76b9ed]", (
    <Svg>
      <path d="M1 3h8l2 2h12v16H1z" fill="#e8b840" />
      <path d="M2 7h21v14H1z" fill="#fcdf87" />
      <path d="M5 22v-8h14v8h-4v-4H9v4z" fill="#38a0e0" />
    </Svg>
  )],
  ["Store", "", (
    <Svg>
      <path d="M7 7V1h10v6" stroke="#eee" strokeWidth="1.5" />
      <path d="M0 4h24l-1 20H1z" fill="#f4f4f4" />
      <path d="M7 10h4.5v4H7z" fill="#f25022" /><path d="M12.5 10H17v4h-4.5z" fill="#7fba00" />
      <path d="M7 15h4.5v4H7z" fill="#00a4ef" /><path d="M12.5 15H17v4h-4.5z" fill="#ffb900" />
    </Svg>
  )],
  ["Mail", "", (
    <Svg>
      <path d="M0 9l12-8 12 8v14H0z" fill="#1a72c0" />
      <path d="M3 8h18v7H3z" fill="#f4f4f4" />
      <path d="M0 9l12 8L24 9v14H0z" fill="#2ba4e8" />
      <path d="M0 23l12-8 12 8z" fill="#50c0f4" />
    </Svg>
  )],
  ["Internet Explorer", "", (
    <Svg>
      <path d="M19.5 16.5a8 8 0 1 1 .8-4.2H6.5" stroke="#50c0f0" strokeWidth="4" />
      <path d="M2 22C-1 17 8 4 17 1.5c6-1.5 6 2 4 5" stroke="#f4c430" strokeWidth="2" />
    </Svg>
  )],
  ["Word", "", <Office color="#2b579a" letter="W" />],
  ["Excel", "", <Office color="#1e7145" letter="X" />],
  ["PowerPoint", "", <Office color="#d24726" letter="P" />],
  ["Chrome", "bg-[#76b9ed]", (
    <Svg>
      <circle cx="12" cy="12" r="11" fill="#fbc116" />
      <path d="M12 12L2.5 6.5a11 11 0 0 1 19 0z" fill="#e04a3f" />
      <path d="M12 12L2.5 6.5A11 11 0 0 0 12 23l5-8z" fill="#2ba24c" />
      <circle cx="12" cy="12" r="5" fill="#4688f1" stroke="#fff" strokeWidth="1.5" />
    </Svg>
  )],
  ["Simplify", "", (
    <Svg>
      <circle cx="12" cy="12" r="11" fill="#38a8cc" stroke="#e8f8fc" strokeWidth="1.5" />
      <path d="M17.5 7c-3-4-11-3-10 1 .5 4 10 3 10 8 0 5-9 5-12 1" stroke="#fff" strokeWidth="2" />
    </Svg>
  )],
  ["Snipping tool", "bg-[#76b9ed]", (
    <Svg>
      <ellipse cx="11" cy="9" rx="10.5" ry="7" transform="rotate(-15 11 9)" fill="#f0f0f0" stroke="#d83828" strokeWidth="1.5" />
      <path d="M4 12l14-7" stroke="#888" />
      <circle cx="15" cy="19" r="2.5" stroke="#1c80d8" strokeWidth="1.7" />
      <circle cx="20.5" cy="16" r="2.5" stroke="#1c80d8" strokeWidth="1.7" />
      <path d="M16 17l-1-6M18.5 15L14 12" stroke="#1c80d8" strokeWidth="1.7" />
    </Svg>
  )],
  ["Inkscape", "bg-[#76b9ed]", (
    <Svg>
      <path d="M12 1l11 10-3 3h-4l3 3-5 4-3-1-4-2 4-1-7-2-2-3z" fill="#23262e" />
      <path d="M12 1l7 7-3 1-2-1-2 2-2-2-4 2-1-1z" fill="#f0f0f4" />
      <path d="M18 8l4 4-3 2-4-2z" fill="#3a68b8" />
    </Svg>
  )],
  ["OBS", "", (
    <Svg>
      <circle cx="12" cy="12" r="10.5" fill="#252528" stroke="#c8c8c8" strokeWidth="1.5" />
      <path d="M9 3c-2 5 0 8 3 9M21 10c-4-2-8-1-9 2M8 20c4 0 6-4 4-8M4 9c0 5 5 7 8 3" stroke="#c8c8c8" strokeWidth="1.3" />
    </Svg>
  )],
  ["MakerBot", "", (
    <Svg>
      <path d="M0 0h24v24H0z" fill="#2a2a2a" />
      <circle cx="12" cy="12" r="7.5" stroke="#eee" strokeWidth="1.3" />
      <path d="M8.5 16V9h7v7M12 9v7" stroke="#eee" strokeWidth="1.8" />
    </Svg>
  )],
  ["RDWorks", "bg-[#76b9ed]", <Logo size={24} />],
  ["Viewer", "bg-[#76b9ed]", (
    <Svg>
      <path d="M12 1l9 4 2 8-5 8-9 1-7-6 2-11z" fill="#9aa4b4" />
      <path d="M12 1l9 4-7 6z" fill="#c05040" />
      <path d="M21 5l2 8-9-2z" fill="#7c3838" />
      <path d="M23 13l-5 8-4-10z" fill="#d86848" />
      <path d="M4 5l10 6-5 11-7-6z" fill="#b8c4d8" />
      <path d="M14 11l4 10-9 1z" fill="#78808c" />
    </Svg>
  )],
];

function Taskbar() {
  return (
    <div className="flex h-10 shrink-0 items-stretch bg-[#060b12] font-['Roboto',sans-serif] text-white">
      <button type="button" aria-label="Start" className="flex w-12 items-center justify-center">
        <Svg w={16} h={16}><path d="M0 2l7-1v6.5H0zM8 1l8-1v7.5H8zM0 8.5h7V15l-7-1zM8 8.5h8V16l-8-1z" fill="#fff" /></Svg>
      </button>
      <button type="button" aria-label="Task view" className="flex w-[49px] items-center justify-center">
        <Svg w={18} h={16} crisp>
          <path d="M1.5 0v2.5h10V0M1.5 16v-2.5h10V16M1.5 5.5h10v5h-10zM15.5 0v16" stroke="#fff" />
          <path d="M14 4h3v3h-3z" fill="#fff" />
        </Svg>
      </button>
      {apps.map(([name, bar, icon]) => (
        <button
          key={name}
          type="button"
          aria-label={name}
          className={`flex w-[49px] flex-col items-center justify-between pt-2 ${name === "RDWorks" ? "bg-[#3a3f47]" : ""}`}
        >
          {icon}
          <span className={`h-0.5 ${name === "RDWorks" ? "w-full" : "w-10"} ${bar}`} />
        </button>
      ))}
      <div className="ml-auto flex items-center">
        <button type="button" aria-label="People" className="mr-[21px]">
          <Svg w={16} h={16}>
            <circle cx="11" cy="4" r="2.8" stroke="#fff" strokeWidth="1.2" />
            <circle cx="5" cy="8" r="2.5" stroke="#fff" strokeWidth="1.2" />
            <path d="M1 15c0-6 8-6 8 0M9 9c3-3 6 0 6 3" stroke="#fff" strokeWidth="1.2" />
          </Svg>
        </button>
        <button type="button" aria-label="Hidden icons" className="mr-[11px]">
          <Svg w={14} h={8}><path d="M1.5 7L7 1.5 12.5 7" stroke="#fff" strokeWidth="1.4" /></Svg>
        </button>
        <button type="button" aria-label="Network" className="mr-1.5">
          <Svg w={14} h={14}>
            <path d="M1 13A12 12 0 0 1 13 1" stroke="#777" strokeWidth="1.2" />
            <path d="M4 13a9 9 0 0 1 9-9M7 13a6 6 0 0 1 6-6M10 13a3 3 0 0 1 3-3" stroke="#fff" strokeWidth="1.2" />
          </Svg>
        </button>
        <button type="button" aria-label="Volume" className="mr-2">
          <Svg w={18} h={14}>
            <path d="M1 5h2.5L7 1.5v11L3.5 9H1z" stroke="#fff" strokeWidth="1.1" />
            <path d="M9.5 5c1 1 1 3 0 4M12 3c2 2 2 6 0 8M14.5 1.5c3 3 3 8 0 11" stroke="#fff" strokeWidth="1.1" />
          </Svg>
        </button>
        <span className="mr-2.5 text-[12px]">ENG</span>
        <div className="mr-[15px] text-center text-[12px] leading-[18px]">
          <div>2:37 PM</div>
          <div>27/08/2020</div>
        </div>
        <button type="button" aria-label="Notifications" className="mr-5">
          <Svg w={16} h={16}>
            <path d="M0 0h16v12h-6v4l-4-4H0z" fill="#fff" />
            <path d="M3 3.5h10M3 6h10M3 8.5h7" stroke="#111" />
          </Svg>
        </button>
        <div className="mr-1 h-10 w-px bg-[#555]" />
      </div>
    </div>
  );
}

export default function App() {
  return (
    <div className="flex h-screen flex-col overflow-hidden bg-[#f0f0f0] font-['DejaVu_Sans_Condensed','Noto_Sans',sans-serif] text-[11px] text-black">
      <header className="h-[43px] shrink-0 bg-white font-['Roboto',sans-serif] text-[12px]">
        <div className="flex h-[22px] items-center">
          <div className="ml-0.5 mr-[5px]"><Logo size={16} /></div>
          <h1 className="flex-1">RDWorksV8.01.47-20200323-[Unnamed-C:\Users\Admin.KSC-BRAVE01\Downloads\dash-test.dxf]</h1>
          <button type="button" aria-label="Minimize" className="flex w-[46px] justify-center">
            <Svg w={10} h={10} crisp><path d="M0 5.5h10" stroke="#000" /></Svg>
          </button>
          <button type="button" aria-label="Restore" className="flex w-[45px] justify-center">
            <Svg w={10} h={10} crisp><path d="M.5 2.5h7v7h-7zM2.5 2V.5h7v7H8" stroke="#000" /></Svg>
          </button>
          <button type="button" aria-label="Close" className="mr-0.5 flex w-[46px] justify-center">
            <Svg w={11} h={11}><path d="M.5 .5l10 10M10.5 .5l-10 10" stroke="#000" /></Svg>
          </button>
        </div>
        <nav aria-label="Menu" className="flex h-[21px] items-center gap-[13px] pl-[7px]">
          {["File(F)", "Edit(E)", "Draw(D)", "Config(S)", "Handle(W)", "Tool(T)", "Model(M)", "View(V)", "Help(H)"].map((m) => (
            <button key={m} type="button">{m}</button>
          ))}
        </nav>
      </header>
      <div className="shrink-0 border-b border-t border-b-[#a0a0a0] border-t-[#a0a0a0]">
        <MainToolbar />
        <PositionBar />
        <CutBar />
      </div>
      <div className="flex min-h-0 flex-1">
        <SideBar />
        <Workspace />
        <aside className="flex w-[296px] shrink-0 flex-col border-l border-white">
          <LayerPanel />
          <WorkPanel />
        </aside>
      </div>
      <div className="shrink-0 border-t border-white">
        <Palette />
        <StatusBar />
      </div>
      <Taskbar />
    </div>
  );
}
